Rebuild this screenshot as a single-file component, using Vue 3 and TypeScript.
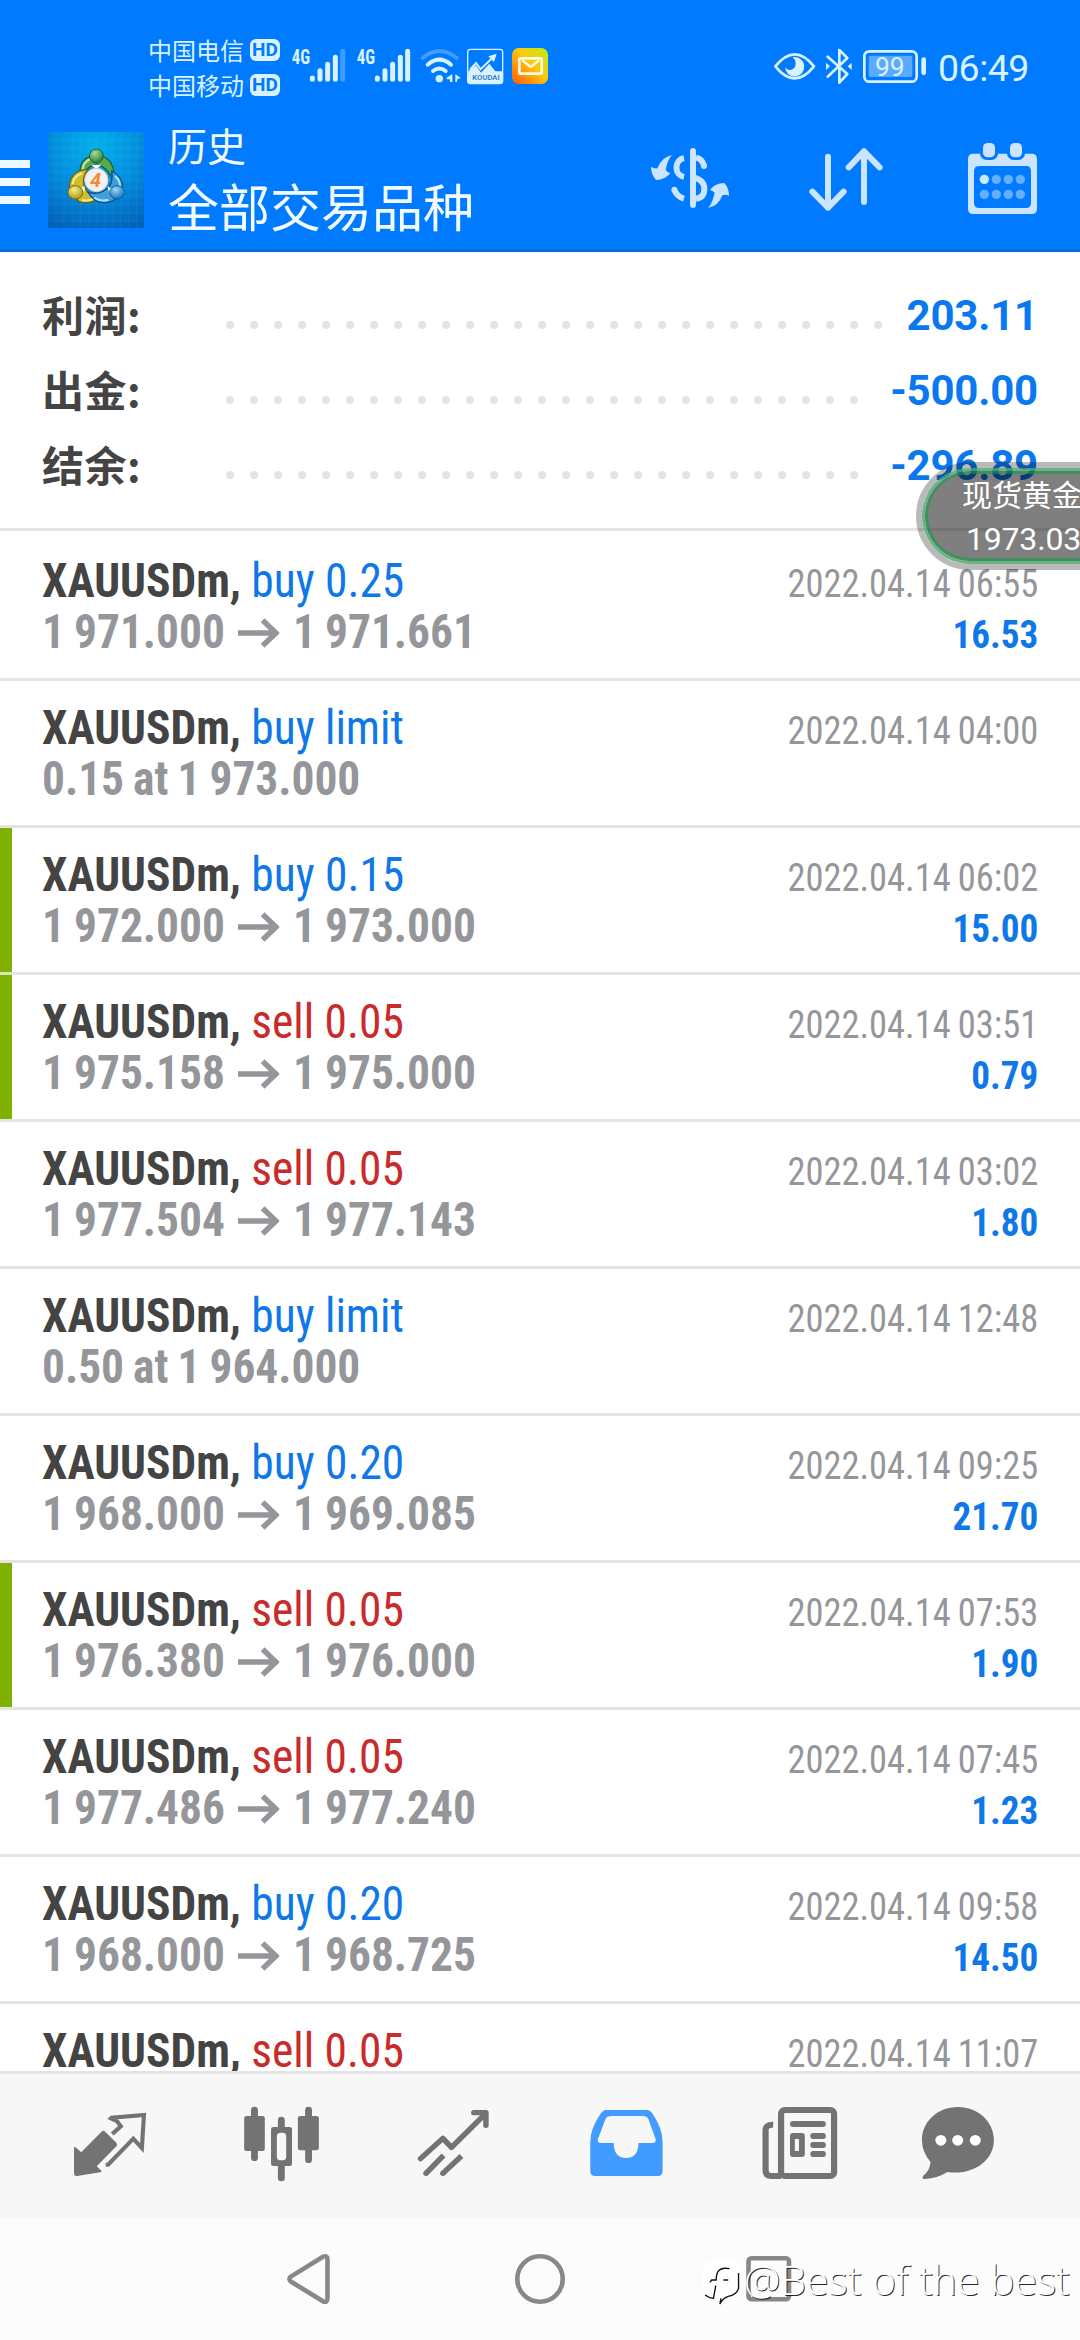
<script setup lang="ts">
interface Deal {
  side: 'buy' | 'sell'
  detail: string
  from?: string
  to?: string
  note?: string
  time: string
  profit?: string
  marked?: boolean
}

const carriers = ['中国电信', '中国移动']

const summary = [
  { label: '利润', value: '203.11', dots: 28 },
  { label: '出金', value: '-500.00', dots: 27 },
  { label: '结余', value: '-296.89', dots: 27 },
]

const deals: Deal[] = [
  { side: 'buy', detail: '0.25', from: '1 971.000', to: '1 971.661', time: '2022.04.14 06:55', profit: '16.53' },
  { side: 'buy', detail: 'limit', note: '0.15 at 1 973.000', time: '2022.04.14 04:00' },
  { side: 'buy', detail: '0.15', from: '1 972.000', to: '1 973.000', time: '2022.04.14 06:02', profit: '15.00', marked: true },
  { side: 'sell', detail: '0.05', from: '1 975.158', to: '1 975.000', time: '2022.04.14 03:51', profit: '0.79', marked: true },
  { side: 'sell', detail: '0.05', from: '1 977.504', to: '1 977.143', time: '2022.04.14 03:02', profit: '1.80' },
  { side: 'buy', detail: 'limit', note: '0.50 at 1 964.000', time: '2022.04.14 12:48' },
  { side: 'buy', detail: '0.20', from: '1 968.000', to: '1 969.085', time: '2022.04.14 09:25', profit: '21.70' },
  { side: 'sell', detail: '0.05', from: '1 976.380', to: '1 976.000', time: '2022.04.14 07:53', profit: '1.90', marked: true },
  { side: 'sell', detail: '0.05', from: '1 977.486', to: '1 977.240', time: '2022.04.14 07:45', profit: '1.23' },
  { side: 'buy', detail: '0.20', from: '1 968.000', to: '1 968.725', time: '2022.04.14 09:58', profit: '14.50' },
  { side: 'sell', detail: '0.05', time: '2022.04.14 11:07' },
]
</script>

<template>
  <div class="screen">
    <header class="top">
      <div class="status">
        <div class="carriers">
          <div v-for="c in carriers" :key="c" class="carrier">
            <span>{{ c }}</span><b class="hd">HD</b>
          </div>
        </div>
        <svg class="st" width="65" height="90" viewBox="480 0 195 270">
          <text x="485" y="132" class="gen" textLength="55" lengthAdjust="spacingAndGlyphs">4G</text>
          <g stroke="#d8f3ff" stroke-width="15" stroke-linecap="round">
            <path d="M547 174v4M570 152v26M593 133v45M616 112v66" /><path d="M638 94v84" opacity=".28" />
          </g>
        </svg>
        <svg class="st" width="65" height="90" viewBox="675 0 195 270">
          <text x="680" y="132" class="gen" textLength="55" lengthAdjust="spacingAndGlyphs">4G</text>
          <path d="M742 174v4M765 152v26M788 133v45M811 112v66M833 94v84" stroke="#d8f3ff" stroke-width="15" stroke-linecap="round" />
        </svg>
        <svg class="st" width="45" height="90" viewBox="870 0 135 270">
          <g fill="none" stroke="#d8f3ff" stroke-width="12" stroke-linecap="round">
            <path d="M878 114Q928 72 980 114" opacity=".3" />
            <path d="M893 134Q928 104 963 134M909 153Q928 138 947 153" />
          </g>
          <circle cx="928" cy="176" r="11" fill="#d8f3ff" />
          <path d="M967 162v24h-7v-8h-10v-5zM976 162l16 12-10 3-1 9h-5z" fill="#d8f3ff" />
        </svg>
        <svg class="st" width="45" height="90" viewBox="1005 0 135 270">
          <rect x="1013" y="88" width="105" height="103" rx="8" fill="#007aff" stroke="#d8f3ff" stroke-width="4" />
          <path d="M1015 154L1038 136L1053 158L1078 131L1096 154H1118V184Q1118 191 1111 191H1020Q1013 191 1013 184Z" fill="#d8f3ff" />
          <path d="M1020 149L1038 129L1052 148L1089 112" fill="none" stroke="#d8f3ff" stroke-width="6" />
          <path d="M1100 101l-25 8 17 17z" fill="#d8f3ff" />
          <text x="1027" y="180" class="koudai" textLength="82" lengthAdjust="spacingAndGlyphs">KOUDAI</text>
        </svg>
        <svg class="st" width="40" height="90" viewBox="1140 0 120 270">
          <defs>
            <linearGradient id="mail" x1="0" y1="1" x2="1" y2="0">
              <stop offset="0" stop-color="#ff5a0a" /><stop offset=".25" stop-color="#ff8a0c" />
              <stop offset=".55" stop-color="#fdc80a" /><stop offset="1" stop-color="#b8f01c" />
            </linearGradient>
          </defs>
          <rect x="1146" y="84" width="108" height="108" rx="20" fill="url(#mail)" />
          <rect x="1168" y="115" width="67" height="46" rx="4" fill="none" stroke="#fffbe8" stroke-width="8" />
          <path d="M1177 121l25 20 25-20" fill="none" stroke="#fffbe8" stroke-width="7" />
        </svg>
        <svg class="st right" width="170" height="90" viewBox="30 -30 510 270">
          <path d="M46 109Q104 37 162 109Q104 181 46 109Z" fill="none" stroke="#d8f3ff" stroke-width="8" stroke-linejoin="round" />
          <path d="M98 82a29 29 0 1 1-23 30q5 9 16 8 16-3 16-20 0-11-9-18z" fill="#d8f3ff" />
          <path d="M203 80L262 132L238 158V60L262 84L203 140" fill="none" stroke="#d8f3ff" stroke-width="8" stroke-linejoin="round" stroke-linecap="round" />
          <path d="M198 98l12 11-12 11zM275 98l-12 11 12 11z" fill="#d8f3ff" />
          <rect x="313" y="64" width="157" height="91" rx="15" fill="none" stroke="#d8f3ff" stroke-width="8" />
          <rect x="326" y="77" width="131" height="64" rx="6" fill="#5caaff" />
          <text x="345" y="139" class="level" textLength="89" lengthAdjust="spacingAndGlyphs">99</text>
          <path d="M491 89v39" stroke="#d8f3ff" stroke-width="14" stroke-linecap="round" />
        </svg>
        <span class="clock">06:49</span>
      </div>

      <div class="appbar">
        <div class="menu"><i></i><i></i><i></i></div>
        <svg class="logo" width="96" height="96" viewBox="144 66 288 288">
          <defs>
            <radialGradient id="sky" cx=".5" cy=".15" r=".95">
              <stop offset="0" stop-color="#02b2ea" /><stop offset=".45" stop-color="#0390e0" /><stop offset="1" stop-color="#0160b8" />
            </radialGradient>
            <radialGradient id="gr" cx=".4" cy=".3" r=".7"><stop offset="0" stop-color="#a8dc98" /><stop offset="1" stop-color="#25803a" /></radialGradient>
            <radialGradient id="ye" cx=".4" cy=".3" r=".7"><stop offset="0" stop-color="#f7ee8e" /><stop offset="1" stop-color="#b39a18" /></radialGradient>
            <radialGradient id="bl" cx=".4" cy=".3" r=".7"><stop offset="0" stop-color="#9cd8fa" /><stop offset="1" stop-color="#1673b8" /></radialGradient>
          </defs>
          <rect x="144" y="66" width="288" height="288" fill="url(#sky)" />
          <path d="M192 66v288M217 66v288M241 66v288M265 66v288M289 66v288M313 66v288M337 66v288M361 66v288M385 66v288M409 66v288M168 66v288M144 91h288M144 115h288M144 139h288M144 163h288M144 187h288M144 211h288M144 235h288M144 259h288M144 283h288M144 308h288M144 332h288" stroke="#7cc8ff" stroke-width="1.5" opacity=".2" />
          <path d="M240 185Q238 153 272 137Q312 130 332 158Q347 182 337 207Q328 183 306 170L290 161Q270 168 256 181Z" fill="#55aa50" stroke="#175f35" stroke-width="4" />
          <path d="M248 178Q250 155 272 147" fill="none" stroke="#c0e6a6" stroke-width="7" />
          <path d="M208 238Q207 194 242 182L266 177Q244 200 253 230Q264 254 296 266Q270 284 237 275Z" fill="#d0bc2d" stroke="#6b6414" stroke-width="4" />
          <path d="M218 222Q221 197 247 190M245 270Q265 275 280 266" fill="none" stroke="#f4ee92" stroke-width="6" />
          <path d="M335 183Q367 197 368 234Q359 263 333 275Q287 287 264 247Q302 257 327 232Q340 212 335 183Z" fill="#409fdd" stroke="#12518c" stroke-width="4" />
          <path d="M345 198Q360 210 360 229M283 263Q300 276 325 269" fill="none" stroke="#b2e1fb" stroke-width="6" />
          <path d="M274 164h30l-15 14zM240 237l14-9v17zM322 228l14 10-8 12z" fill="#fff" />
          <circle cx="289" cy="138" r="21" fill="url(#gr)" stroke="#1b653c" stroke-width="3" />
          <ellipse cx="226" cy="247" rx="22" ry="20" fill="url(#ye)" stroke="#7a7018" stroke-width="3" />
          <ellipse cx="351" cy="247" rx="22" ry="20" fill="url(#bl)" stroke="#185f9a" stroke-width="3" />
          <circle cx="289" cy="210" r="35" fill="#f3f1ef" stroke="#d0cfcd" stroke-width="3" />
          <text x="287" y="232" class="four" text-anchor="middle">4</text>
        </svg>
        <div class="titles">
          <div class="t1">历史</div>
          <div class="t2">全部交易品种</div>
        </div>
        <svg width="160" height="138" viewBox="0 -27 480 414">
          <g fill="#cbe4ff">
            <path d="M156 105Q142 121 137 149Q143 158 151 160Q136 179 108 180Q94 165 93 140Q103 147 112 145Q124 112 156 105Z" />
            <path d="M264 264Q278 248 284 218Q278 212 270 210Q285 189 313 189Q327 204 327 228Q318 222 307 226Q296 258 264 264Z" />
          </g>
          <g fill="none" stroke="#cbe4ff" stroke-width="18">
            <path d="M219 93V255" stroke-linecap="round" />
            <path d="M192 114A28 29 0 0 0 192 171M163 209Q170 230 192 236" />
            <path d="M228 113Q248 117 252 138M219 172Q253 179 253 207Q253 233 228 236" />
            <path d="M163 209v.1M252 138v.1" stroke-linecap="round" />
          </g>
        </svg>
        <svg width="160" height="138" viewBox="480 -27 480 414">
          <path d="M624 110V263M577 215L624 263L671 215M732 246V94M686 142L732 94L779 142" fill="none" stroke="#cbe4ff" stroke-width="18" stroke-linecap="round" stroke-linejoin="round" />
        </svg>
        <svg width="140" height="138" viewBox="960 -27 420 414">
          <path fill-rule="evenodd" d="M1060 101H1235Q1251 101 1251 117V266Q1251 282 1235 282H1060Q1044 282 1044 266V117Q1044 101 1060 101ZM1078 138Q1062 138 1062 154V248Q1062 264 1078 264H1218Q1233 264 1233 248V154Q1233 138 1218 138Z" fill="#cbe4ff" />
          <rect x="1080" y="60" width="54" height="60" rx="20" fill="#007aff" /><rect x="1161" y="60" width="54" height="60" rx="20" fill="#007aff" />
          <rect x="1089" y="69" width="36" height="43" rx="14" fill="#cbe4ff" /><rect x="1170" y="69" width="36" height="43" rx="14" fill="#cbe4ff" />
          <g fill="#66afff">
            <circle cx="1093" cy="178" r="14" fill="#cbe9ff" /><circle cx="1129" cy="178" r="14" /><circle cx="1165" cy="178" r="14" /><circle cx="1201" cy="178" r="14" />
            <circle cx="1093" cy="223" r="14" /><circle cx="1129" cy="223" r="14" /><circle cx="1165" cy="223" r="14" /><circle cx="1201" cy="223" r="14" />
          </g>
        </svg>
      </div>
    </header>

    <section class="summary">
      <div v-for="s in summary" :key="s.label" class="sum">
        <span class="sum-label">{{ s.label }}:</span>
        <span class="dots"><i v-for="n in s.dots" :key="n"></i></span>
        <span class="sum-value">{{ s.value }}</span>
      </div>
    </section>

    <main class="list">
      <article v-for="(d, i) in deals" :key="i" class="deal" :class="{ marked: d.marked, joined: d.marked && deals[i - 1]?.marked }">
        <div class="left">
          <div class="line"><b>XAUUSDm,</b> <span :class="d.side">{{ d.side }} {{ d.detail }}</span></div>
          <div class="line price">
            <template v-if="d.from">{{ d.from }}<svg class="arrow" width="44" height="30" viewBox="0 0 42 30" preserveAspectRatio="none"><path d="M0 15H38M25 2.200L38.500 15L25 27.800" fill="none" stroke="#95969a" stroke-width="5.500" /></svg>{{ d.to }}</template>
            <template v-else>{{ d.note }}</template>
          </div>
        </div>
        <div class="side">
          <div class="time">{{ d.time }}</div>
          <div class="profit">{{ d.profit }}</div>
        </div>
      </article>
    </main>

    <nav class="tabs">
      <svg viewBox="0 42 522.700 432" preserveAspectRatio="none">
        <path d="M215 261Q219 260 221 263L236 277L294 216Q300 209 306 216L338 248Q342 254 338 259L281 319L295 333Q295 336 291 337L224 348Q215 349 215 340Z" fill="#737373" />
        <path d="M326 222L351 199L340 184L322 175L324 173L418 165L412 264L387 236L314 314H307" fill="none" stroke="#737373" stroke-width="12" />
      </svg>
      <svg viewBox="522.700 42 522.700 432" preserveAspectRatio="none">
        <path d="M739 150V293M817 180V354M896 150V299" stroke="#737373" stroke-width="20" stroke-linecap="round" />
        <rect x="709" y="168" width="60" height="105" rx="7" fill="#737373" /><rect x="865" y="168" width="61" height="103" rx="7" fill="#737373" />
        <rect x="787" y="201" width="61" height="117" rx="7" fill="#737373" /><rect x="804" y="218" width="27" height="83" rx="11" fill="#f7f7f7" />
      </svg>
      <svg viewBox="1045.400 42 522.600 432" preserveAspectRatio="none">
        <path d="M1221 296L1286 235L1311 262L1407 164M1376 158H1411V196" fill="none" stroke="#737373" stroke-width="16" stroke-linecap="round" stroke-linejoin="round" />
        <path d="M1237 340L1288 286M1286 340L1340 288" fill="none" stroke="#737373" stroke-width="16" />
        <circle cx="1237" cy="340" r="8" fill="#737373" /><circle cx="1286" cy="340" r="8" fill="#737373" />
      </svg>
      <svg viewBox="0 42 522.700 432" preserveAspectRatio="none">
        <path fill-rule="evenodd" d="M190 150H311Q319 150 325 158Q356 204 356 246V334Q356 348 342 348H160Q146 348 146 334V246Q146 204 178 158Q184 150 190 150ZM208 168Q194 168 190 178L168 238Q166 249 177 249H214Q214 293 250 294Q286 293 286 249H326Q338 249 336 238L315 178Q311 168 297 168Z" fill="#429bff" />
      </svg>
      <svg viewBox="522.700 42 522.700 432" preserveAspectRatio="none">
        <g fill="none" stroke="#737373" stroke-width="18">
          <rect x="700" y="150" width="154" height="198" rx="11" />
          <path d="M677 194Q655 193 655 212V330Q655 348 672 348H700" />
        </g>
        <g fill="#737373">
          <rect x="726" y="183" width="104" height="18" rx="9" /><rect x="785" y="219" width="45" height="18" rx="8" /><rect x="785" y="246" width="45" height="18" rx="8" /><rect x="785" y="273" width="45" height="18" rx="8" />
          <path fill-rule="evenodd" d="M735 219H760Q769 219 769 228V282Q769 291 760 291H735Q726 291 726 282V228Q726 219 735 219ZM740 237V273H752V237Z" />
        </g>
      </svg>
      <svg viewBox="1045.400 42 522.600 432" preserveAspectRatio="none">
        <path d="M1213 141C1272 141 1318 185 1318 240C1318 303 1257 347 1183 336Q1155 355 1117 357Q1107 355 1113 347Q1132 332 1134 306Q1109 275 1109 241C1109 185 1155 141 1213 141Z" fill="#737373" />
        <circle cx="1164" cy="241" r="16" fill="#fff" /><circle cx="1213" cy="241" r="16" fill="#fff" /><circle cx="1264" cy="241" r="16" fill="#fff" />
      </svg>
    </nav>

    <footer class="sysnav">
      <svg width="1080" height="122" viewBox="0 2218 1080 122">
        <g fill="none" stroke="#888" stroke-width="4.600" stroke-linejoin="round">
          <path d="M290.800 2276.600Q288 2279 290.800 2281.500L323 2301.300Q327.500 2303 327.500 2298.500V2259.500Q327.500 2255 323 2256.700Z" />
          <circle cx="540" cy="2279" r="22.700" />
          <rect x="748.500" y="2258.300" width="40.500" height="41" rx="3" />
        </g>
      </svg>
      <div class="mark">
        <svg width="40" height="48" viewBox="470 595 116 144" preserveAspectRatio="none">
          <path d="M493 606H556Q578 606 578 630V690Q570 708 545 712Q530 720 522 734L526 716H500Q471 700 471 670V630Q471 606 493 606Z" fill="#fff" />
          <path d="M550 627Q524 622 515 638Q511 648 511 662M493 668L498 661H513M532 661H546M510 678Q506 700 503 716Q490 715 479 706M576 640V686Q570 706 546 710Q530 716 522 733L525 716" fill="none" stroke="#111" stroke-width="4" />
        </svg>
        <span>@Best of the best</span>
      </div>
    </footer>

    <aside class="float">
      <div class="float-in">
        <div class="f1">现货黄金</div>
        <div class="f2">1973.03</div>
      </div>
    </aside>
  </div>
</template>

<style>
body { margin: 0; background: #fff; overflow: hidden; }
</style>

<style scoped>
.screen { position: relative; width: 1080px; height: 2340px; overflow: hidden; display: flex; flex-direction: column; background: #fff; font-family: Roboto, "Noto Sans CJK SC", sans-serif; }
svg { display: block; flex: none; }
.top { box-sizing: border-box; height: 252px; flex: none; background: #007aff; border-bottom: 3px solid #0a6ade; }
.status { box-sizing: border-box; height: 111px; padding: 20px 0 0 148px; display: flex; color: #d8f3ff; }
.carriers { width: 142px; padding-top: 12px; }
.carrier { height: 35px; display: flex; align-items: center; font: 400 24px/35px "Noto Sans CJK SC", sans-serif; }
.hd { margin-left: 6px; width: 30px; height: 22px; border-radius: 6px; background: #d8f3ff; color: #007aff; font: 700 19px/22px Roboto, sans-serif; text-align: center; }
.gen { font: 700 58px "Roboto Condensed", Roboto, sans-serif; fill: #d8f3ff; }
.koudai { font: 500 22px Roboto, sans-serif; fill: #2a72c4; }
.level { font: 400 80px Roboto, sans-serif; fill: #d8f3ff; }
.right { margin-left: 220px; }
.clock { margin-left: -2px; height: 90px; font: 400 37.500px/97px Roboto, sans-serif; letter-spacing: -0.500px; }
.appbar { height: 138px; display: flex; }
.menu { width: 30px; padding-top: 49px; display: flex; flex-direction: column; gap: 10px; }
.menu i { height: 8px; background: #edf9ff; }
.logo { margin: 21px 0 0 18px; }
.four { font: italic 700 60px Roboto, sans-serif; fill: #f08a3c; }
.titles { width: 452px; margin-left: 24px; padding-top: 11px; color: #f2fbff; font-family: "Noto Sans CJK SC", sans-serif; }
.t1 { font-size: 39px; line-height: 45px; }
.t2 { margin-top: 8px; font-size: 51px; line-height: 60px; }
.summary { box-sizing: border-box; height: 279px; flex: none; padding: 26px 42px 0; border-bottom: 3px solid #e4e4e4; }
.sum { height: 75px; display: flex; line-height: 75px; font-size: 42px; font-weight: 700; }
.sum-label { width: 176px; color: #444; font-family: "Noto Sans CJK SC", sans-serif; line-height: 72px; letter-spacing: 0.500px; }
.dots { display: flex; padding-top: 43px; }
.dots i { width: 8px; height: 8px; margin: 0 8px; border-radius: 50%; background: #e4e4e4; }
.sum-value { margin-left: auto; color: #0a78f0; letter-spacing: -0.200px; }
.list { flex: none; height: 1540px; overflow: hidden; }
.deal { box-sizing: border-box; height: 147px; padding: 21px 42px 0; border-top: 3px solid #e4e4e4; display: flex; justify-content: space-between; align-items: baseline; font-family: "Roboto Condensed", Roboto, sans-serif; }
.deal:first-child { border-top-color: #fff; }
.left { transform: scaleX(.946); transform-origin: left; }
.marked { background: linear-gradient(90deg, #80b000 12px, #fff 12px); }
.joined { border-image: linear-gradient(90deg, #d5e8b0 12px, #e4e4e4 12px) 3 0 0 0; }
.line { font-size: 48px; line-height: 51px; white-space: pre; color: #444; }
.price { color: #95969a; font-weight: 700; word-spacing: -1.500px; }
.buy { color: #0f78e8; }
.sell { color: #c92a2a; }
.arrow { display: inline-block; margin: 0 14px; vertical-align: 0; }
.side { text-align: right; font-size: 39px; line-height: 51px; }
.time { color: #95969a; word-spacing: -1.300px; transform: scaleX(.935); transform-origin: right; }
.profit { color: #0f78e8; font-weight: 700; height: 51px; transform: scaleX(.952); transform-origin: right; }
.tabs { box-sizing: border-box; height: 147px; flex: none; border-top: 3px solid #e4e4e4; background: #f7f7f7; display: flex; }
.tabs svg { width: 180px; height: 144px; }
.sysnav { position: relative; height: 122px; flex: none; background: #fcfcfc; }
.mark { position: absolute; left: 702px; top: 40px; display: flex; }
.mark span { margin: -3px 0 0 2px; white-space: pre; font: 300 41px/48px "Open Sans", "Noto Sans", sans-serif; color: #fff; text-shadow: 1px 1px 0 rgba(0, 0, 0, .85); }
.float { position: absolute; left: 916px; top: 462px; box-sizing: border-box; width: 240px; height: 108px; border-radius: 54px; border: 6px solid rgba(0, 0, 0, .27); }
.float-in { box-sizing: border-box; height: 96px; border-radius: 48px; border: 3px solid rgba(70, 160, 105, .8); box-shadow: inset 0 0 0 3px rgba(30, 150, 75, .6); background: rgba(0, 0, 0, .5); background-clip: padding-box; color: #fff; padding-left: 37px; white-space: nowrap; }
.f1 { font: 400 30px/44px "Noto Sans CJK SC", sans-serif; }
.f2 { margin: 3px 0 0 4px; font: 400 32px/42px Roboto, sans-serif; letter-spacing: -0.200px; }
</style>
